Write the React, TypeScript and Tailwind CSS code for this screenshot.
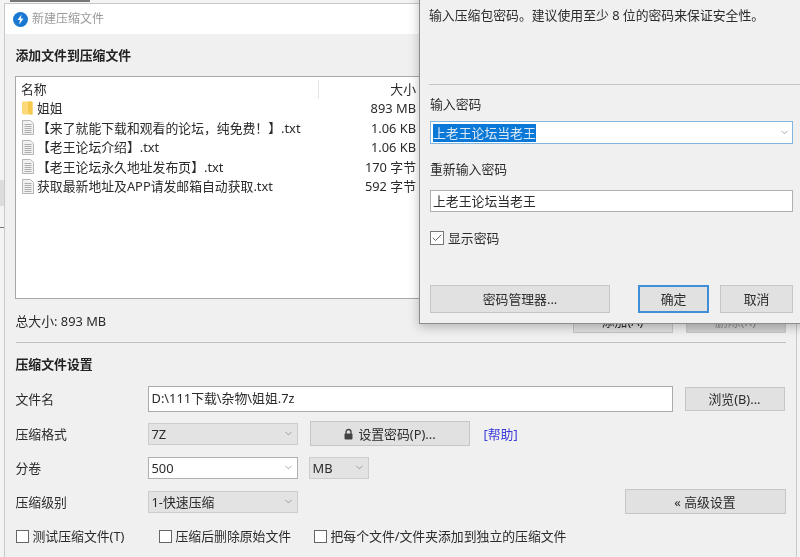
import React from "react";
import { ChevronDown, Check } from "lucide-react";

function FileIcon() {
  return (
    <svg width="12" height="15" viewBox="0 0 12 15" className="shrink-0">
      <path d="M0.5 0.5H8.5L11.5 3.5V14.5H0.5Z" fill="#f1f1f1" stroke="#b5b5b5" />
      <path d="M2.5 4.5H9.5M2.5 6.5H9.5M2.5 8.5H9.5M2.5 10.5H9.5M2.5 12.5H9.5" stroke="#adadad" />
    </svg>
  );
}

function FolderIcon() {
  return (
    <svg width="11" height="14" viewBox="0 0 11 14" className="shrink-0">
      <path d="M0 1.5Q0 0.5 1 0.5H9Q10.5 0.5 10.5 1.5V13.5H2Q0 13.5 0 12Z" fill="#fbd978" />
      <path d="M6 0.5H9.5Q10.5 0.5 10.5 1.5V13.5H8L6 11.5Z" fill="#f5c84c" />
    </svg>
  );
}

function Row({ icon, name, size }: { icon: React.ReactNode; name: string; size: string }) {
  return (
    <div className="flex h-[19.5px] items-center">
      <div className="flex w-[297px] items-center">
        <div className="flex w-[16px] justify-center pr-[3px]">{icon}</div>
        <span>{name}</span>
      </div>
      <div className="w-[98px] text-right">{size}</div>
    </div>
  );
}

function Btn({ children, className, tone }: { children: React.ReactNode; className: string; tone?: string }) {
  return (
    <div className={"flex items-center justify-center " + (tone ?? "border border-[#c6c6c6] bg-[#e1e1e1]") + " " + className}>{children}</div>
  );
}

function Sel({ children, w, white }: { children: React.ReactNode; w: string; white?: boolean }) {
  return (
    <div className={"flex h-[22px] items-center justify-between border pl-[3px] pr-[3px] " + w + " " + (white ? "border-[#b0b0b0] bg-white" : "border-[#cdcdcd] bg-[#e3e3e3]")}>
      <span>{children}</span>
      <ChevronDown size={11} strokeWidth={1.2} color="#666" />
    </div>
  );
}

function Box({ label, className }: { label: string; className: string }) {
  return (
    <div className={"flex items-center gap-[4px] " + className}>
      <div className="h-[13px] w-[13px] border border-[#666] bg-white" />
      <span>{label}</span>
    </div>
  );
}

export default function App() {
  return (
    <div
      className="relative h-[557px] w-[800px] overflow-hidden bg-[#f3f3f3] text-[12.85px] leading-[18px] text-[#2b2b2b] blur-[0.4px]"
      style={{ fontFamily: '"Noto Sans", "Noto Sans CJK SC", sans-serif' }}
    >
      {/* desktop behind the window */}
      <div className="absolute left-[10px] top-0 h-[2px] w-[80px] bg-[#777]" />
      <div className="absolute left-0 top-[180px] h-[26px] w-[4px] bg-[#dcdcdc]" />
      <div className="absolute left-0 top-[227px] h-px w-[4px] bg-[#777]" />

      {/* main window */}
      <div className="absolute bottom-[-10px] left-[4px] right-[3px] top-[3px] flex flex-col border border-[#c8c8c8] bg-[#f0f0f0]">
        <div className="flex h-[30px] shrink-0 items-center gap-[4px] bg-white pl-[8px]">
          <svg width="15" height="15" viewBox="0 0 15 15">
            <circle cx="7.5" cy="7.5" r="7.5" fill="#1878d2" />
            <path d="M8.5 2.5L4.5 8H7L6.2 12.5L10.5 6.5H7.8Z" fill="#fff" />
          </svg>
          <span className="text-[12px] text-[#9a9a9a]">新建压缩文件</span>
        </div>

        <div className="flex flex-1 flex-col px-[10.5px]">
          <div className="mt-[12px] flex h-[18px] items-center font-bold text-[#222]">添加文件到压缩文件</div>

          <div className="-ml-[0.5px] mt-[12px] h-[223px] w-[771px] border border-[#a8a8a8] bg-white pl-[5px] pt-[2.5px]">
            <div className="flex h-[19px] items-center">
              <div className="h-full w-[297px]">名称</div>
              <div className="flex h-full w-[98px] items-center justify-end border-l border-[#e5e5e5]">大小</div>
            </div>
            <Row icon={<FolderIcon />} name="姐姐" size="893 MB" />
            <Row icon={<FileIcon />} name="【来了就能下载和观看的论坛，纯免费！】.txt" size="1.06 KB" />
            <Row icon={<FileIcon />} name="【老王论坛介绍】.txt" size="1.06 KB" />
            <Row icon={<FileIcon />} name="【老王论坛永久地址发布页】.txt" size="170 字节" />
            <Row icon={<FileIcon />} name="获取最新地址及APP请发邮箱自动获取.txt" size="592 字节" />
          </div>

          <div className="mt-[9px] flex h-[25px] items-start justify-between">
            <span className="mt-[4px]">总大小: 893 MB</span>
            <div className="flex gap-[13px]">
              <Btn className="h-[25px] w-[100px]">添加(A)</Btn>
              <Btn className="h-[25px] w-[100px] text-[#8a8a8a]" tone="border border-[#c6c6c6] bg-[#d0d0d0]">删除(R)</Btn>
            </div>
          </div>

          <div className="mt-[9px] h-px w-[770px] bg-[#c0c0c0]" />

          <div className="mt-[12px] h-[18px] font-bold text-[#222]">压缩文件设置</div>

          <div className="mt-[13px] flex h-[26px] items-center">
            <span className="w-[132px]">文件名</span>
            <div className="flex h-[26px] w-[525px] items-center border border-[#aaa] bg-white pb-[3px] pl-[3px]">D:\111下载\杂物\姐姐.7z</div>
            <Btn className="ml-[12px] h-[24px] w-[100px]">浏览(B)...</Btn>
          </div>

          <div className="mt-[9px] flex h-[25px] items-center">
            <span className="w-[132px]">压缩格式</span>
            <Sel w="w-[150px]">7Z</Sel>
            <Btn className="ml-[12px] h-[25px] w-[160px] gap-[4px]">
              <svg width="11" height="12" viewBox="0 0 11 12">
                <path d="M3 6V4a2.5 2.5 0 0 1 5 0v2" fill="none" stroke="#444" strokeWidth="1.3" />
                <rect x="1.5" y="5.5" width="8" height="6" rx="1" fill="#444" />
              </svg>
              设置密码(P)...
            </Btn>
            <span className="ml-[14px] text-[#3b3bdc]">[帮助]</span>
          </div>

          <div className="mt-[9px] flex h-[25px] items-center">
            <span className="w-[132px]">分卷</span>
            <Sel w="w-[150px]" white>500</Sel>
            <div className="ml-[11px]"><Sel w="w-[60px]">MB</Sel></div>
          </div>

          <div className="mt-[9px] flex h-[25px] items-center">
            <span className="w-[132px]">压缩级别</span>
            <Sel w="w-[150px]">1-快速压缩</Sel>
            <Btn className="ml-[327px] h-[25px] w-[161px]">« 高级设置</Btn>
          </div>

          <div className="mt-[10px] flex h-[24px] items-center">
            <Box label="测试压缩文件(T)" className="w-[143px]" />
            <Box label="压缩后删除原始文件" className="w-[155px]" />
            <Box label="把每个文件/文件夹添加到独立的压缩文件" className="" />
          </div>
        </div>
      </div>

      {/* password dialog */}
      <div className="absolute right-[-10px] top-[-10px] flex h-[334px] w-[391px] flex-col border border-[#8c8c8c] bg-[#f0f0f0] pl-[9px] pr-[16px] shadow-[0_3px_10px_rgba(0,0,0,0.25)]">
        <div className="mt-[15px] h-[18px]">输入压缩包密码。建议使用至少 8 位的密码来保证安全性。</div>
        <div className="mt-[60px] h-px w-[380px] bg-[#c4c4c4]" />
        <div className="ml-[1px] mt-[10px] h-[18px]">输入密码</div>
        <div className="ml-px mt-[8px] flex h-[23px] w-[363px] items-center justify-between border border-[#7fb5e0] bg-white pl-[2px] pr-[2px]">
          <span className="bg-[#0a78d7] text-[#dbe9f7]">上老王论坛当老王</span>
          <ChevronDown size={11} strokeWidth={1.2} color="#666" />
        </div>
        <div className="ml-[1px] mt-[16px] h-[18px]">重新输入密码</div>
        <div className="ml-px mt-[12px] flex h-[22px] w-[363px] items-center border border-[#b0b0b0] bg-white pl-[2px]">上老王论坛当老王</div>
        <div className="ml-px mt-[17px] flex h-[18px] items-center gap-[4px]">
          <div className="flex h-[14px] w-[14px] items-center justify-center border border-[#777] bg-white">
            <Check size={12} strokeWidth={1.5} color="#333" />
          </div>
          <span>显示密码</span>
        </div>
        <div className="ml-px mt-[38px] flex h-[28px] w-[363px]">
          <Btn className="w-[180px]">密码管理器...</Btn>
          <Btn className="ml-[28px] w-[71px]" tone="border-2 border-[#3f8fd6] bg-[#e1e1e1]">确定</Btn>
          <Btn className="ml-[11px] w-[73px]">取消</Btn>
        </div>
      </div>
    </div>
  );
}
